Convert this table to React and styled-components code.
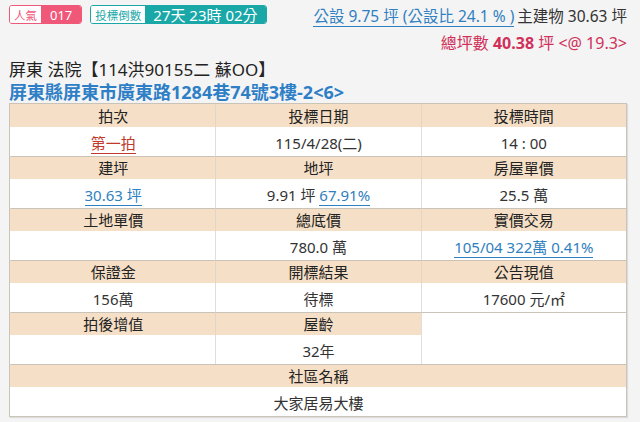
import React from "react"
import styled, { createGlobalStyle } from "styled-components"

const Global = createGlobalStyle`
  html, body {
    margin: 0;
    padding: 0;
    background: #f4f4f4;
  }
  body {
    font-family: "Noto Sans", "Noto Sans CJK TC", sans-serif;
    color: #333;
  }
`

const Page = styled.div`
  width: 640px;
  height: 422px;
  overflow: hidden;
  padding: 5px 13px 0 9px;
  box-sizing: border-box;
`

const TopBar = styled.div`
  display: flex;
  align-items: flex-start;
  justify-content: space-between;
`

const Badges = styled.div`
  display: flex;
  gap: 8px;
`

const Badge = styled.div`
  display: flex;
  height: 19px;
  border: 1px solid ${(p) => p.color};
  border-radius: 3px;
  overflow: hidden;
  box-sizing: border-box;
`

const BadgeLabel = styled.span`
  display: flex;
  align-items: center;
  padding: 0 4px;
  background: #fff;
  color: ${(p) => p.color};
  font-size: 11.5px;
`

const BadgeValue = styled.span`
  display: flex;
  align-items: center;
  padding: 0 ${(p) => p.pad || 8}px;
  background: ${(p) => p.color};
  color: #fff;
  font-size: ${(p) => p.size || 13}px;
`

const AreaBox = styled.div`
  display: flex;
  flex-direction: column;
  align-items: flex-end;
  font-size: 15.5px;
  padding-top: 1px;
`

const AreaLine = styled.div`
  display: flex;
  align-items: baseline;
  gap: 3px;
  line-height: 20px;
`

const Link = styled.span`
  color: ${(p) => p.color || "#2f80c0"};
  border-bottom: 1px solid ${(p) => p.color || "#2f80c0"};
`

const TotalLine = styled.div`
  color: #d0305a;
  margin-top: 6px;
  line-height: 20px;
  font-size: 16px;
  b {
    font-weight: 700;
  }
`

const Title = styled.div`
  margin-top: 6px;
  font-size: 17px;
  color: #222;
  line-height: 22px;
`

const Address = styled.div`
  font-size: 18px;
  font-weight: 700;
  color: #2f7fc7;
  line-height: 22px;
`

const Table = styled.div`
  display: grid;
  grid-template-columns: repeat(3, 1fr);
  border: 1px solid #c9c3b8;
  background: #fff;
  box-shadow: 1px 1px 1px #ddd;
`

const Head = styled.div`
  grid-column: span ${(p) => p.span || 1};
  background: #f5dfc6;
  text-align: center;
  font-size: 15px;
  color: #222;
  line-height: 22px;
  border-top: 1px solid ${(p) => (p.first ? "transparent" : "#c9c3b8")};
  border-left: 1px solid ${(p) => (p.col === 0 ? "transparent" : "#e2d6c6")};
`

const Cell = styled.div`
  grid-column: span ${(p) => p.span || 1};
  grid-row: span ${(p) => p.rows || 1};
  text-align: center;
  font-size: 15px;
  color: #333;
  line-height: 20px;
  padding: 6px 0 3px;
  min-height: 20px;
  border-left: 1px solid ${(p) => (p.col === 0 ? "transparent" : "#e2ddd6")};
  border-top: ${(p) => (p.rows > 1 ? "1px solid #c9c3b8" : "none")};
`

const rows = [
  [
    ["拍次", <Link color="#c0392b">第一拍</Link>],
    ["投標日期", "115/4/28(二)"],
    ["投標時間", "14 : 00"],
  ],
  [
    ["建坪", <Link>30.63 坪</Link>],
    ["地坪", <>9.91 坪 <Link>67.91%</Link></>],
    ["房屋單價", "25.5 萬"],
  ],
  [
    ["土地單價", ""],
    ["總底價", "780.0 萬"],
    ["實價交易", <Link>105/04 322萬 0.41%</Link>],
  ],
  [
    ["保證金", "156萬"],
    ["開標結果", "待標"],
    ["公告現值", "17600 元/㎡"],
  ],
]

const App = () => (
  <Page>
    <Global />
    <TopBar>
      <Badges>
        <Badge color="#f0587a">
          <BadgeLabel color="#f0587a">人氣</BadgeLabel>
          <BadgeValue color="#f0587a" pad={9}>017</BadgeValue>
        </Badge>
        <Badge color="#1aa7a8">
          <BadgeLabel color="#1aa7a8">投標倒數</BadgeLabel>
          <BadgeValue color="#1aa7a8" size={15}>27天 23時 02分</BadgeValue>
        </Badge>
      </Badges>
      <AreaBox>
        <AreaLine>
          <Link>公設 9.75 坪 (公設比 24.1 % )</Link>
          <span>主建物 30.63 坪</span>
        </AreaLine>
        <TotalLine>
          總坪數 <b>40.38</b> 坪 &lt;@ 19.3&gt;
        </TotalLine>
      </AreaBox>
    </TopBar>
    <Title>屏東 法院【114洪90155二 蘇OO】</Title>
    <Address>屏東縣屏東市廣東路1284巷74號3樓-2&lt;6&gt;</Address>
    <Table>
      {rows.map((row, r) => (
        <React.Fragment key={r}>
          {row.map(([h], c) => (
            <Head key={"h" + c} col={c} first={r === 0}>{h}</Head>
          ))}
          {row.map(([, v], c) => (
            <Cell key={"v" + c} col={c}>{v}</Cell>
          ))}
        </React.Fragment>
      ))}
      <Head col={0}>拍後增值</Head>
      <Head col={1}>屋齡</Head>
      <Cell col={2} rows={2} />
      <Cell col={0} />
      <Cell col={1}>32年</Cell>
      <Head col={0} span={3}>社區名稱</Head>
      <Cell col={0} span={3}>大家居易大樓</Cell>
    </Table>
  </Page>
)

export default App
